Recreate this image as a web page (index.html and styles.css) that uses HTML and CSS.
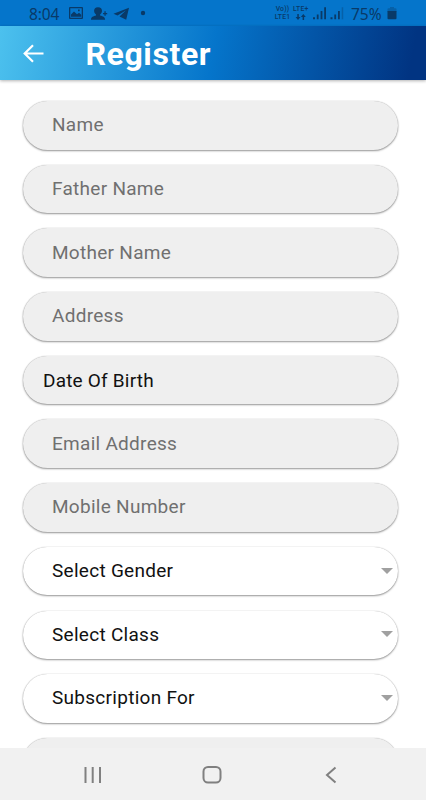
FILE: index.html
```html
<!DOCTYPE html>
<html lang="en">
<head>
<meta charset="utf-8">
<title>Register</title>
<link rel="stylesheet" href="styles.css">
</head>
<body>
<div class="screen">
  <div class="status">
    <span class="clock">8:04</span>
    <svg class="notices" width="80" height="26" viewBox="0 0 80 26">
      <path fill-rule="evenodd" d="M2 7h12q1 0 1 1v10q0 1-1 1H2q-1 0-1-1V8q0-1 1-1zM2.300 8.300v9.400h11.400V8.300zM3 16.800v-2.300l3-3 3 2.700 2-1.500 2.200 2v2.100zM10 9.500h1.700v1.700H10z"/>
      <path d="M30 7.200c2.800 0 4 1.500 4 3.600 0 1.700-.9 3-1.900 3.800v1c2.600.7 5 1.500 5 4.200H23c0-2.700 2.400-3.500 5-4.200v-1c-1-.8-1.900-2.100-1.900-3.800 0-2.100 1.200-3.600 3.900-3.600zM35 12.900h1.400v-1.600h1.300v1.600h1.500v1.300h-1.500v1.600h-1.300v-1.600H35z"/>
      <path d="M61 7.800 45.500 13.800l4 1.800 8.300-5-6.300 6 6.700 3.200z"/>
      <circle cx="75" cy="13" r="2.200"/>
    </svg>
    <div class="network">
      <div class="lines first"><span>Vo))</span><span>LTE1</span></div>
      <div class="lines"><span>LTE+</span><svg width="12" height="6" viewBox="0 0 12 6"><path d="M2.300 0h1.500v3h1.700L3 6 .6 3h1.700zM7.600 6h1.500V3h1.700L8.300 0 5.900 3h1.700z"/></svg></div>
    </div>
    <svg class="signal" width="31" height="26" viewBox="0 0 31 26">
      <path d="M0 17.300h2v2H0zM3.800 14.500h1.800v4.800H3.800zM7.600 11h1.800v8.300H7.600zM11.200 7.300H13v12h-1.800zM17.500 17.300h2v2h-2zM21.300 14.500h1.800v4.800h-1.800zM25 11h1.800v8.300H25z"/>
      <path opacity=".35" d="M28.700 7.300h1.500v12h-1.500z"/>
    </svg>
    <span class="percent">75%</span>
    <svg class="battery" width="10" height="26" viewBox="0 0 10 26">
      <path opacity=".35" d="M3 7h4v1.300h1.500q1 0 1 1V12H.5V9.300q0-1 1-1H3z"/>
      <path d="M.5 11h9v7.200q0 1-1 1h-7q-1 0-1-1z"/>
    </svg>
  </div>
  <header class="appbar">
    <svg width="22" height="20" viewBox="0 0 22 20"><path d="M21.500 10.500H3M11 2.300l-8.300 8.200L11 18.700"/></svg>
    <h1>Register</h1>
  </header>
  <main class="form">
    <div class="field">Name</div>
    <div class="field">Father Name</div>
    <div class="field">Mother Name</div>
    <div class="field">Address</div>
    <div class="field date">Date Of Birth</div>
    <div class="field">Email Address</div>
    <div class="field">Mobile Number</div>
    <div class="field select">Select Gender<i class="caret"></i></div>
    <div class="field select">Select Class<i class="caret"></i></div>
    <div class="field select">Subscription For<i class="caret"></i></div>
    <div class="field"></div>
  </main>
  <nav class="navbar">
    <svg width="20" height="20" viewBox="0 0 20 20"><path d="M2.500 2v16M9.700 2v16M17 2v16"/></svg>
    <svg width="20" height="20" viewBox="0 0 20 20"><rect x="1.500" y="2" width="17" height="15.500" rx="4.500"/></svg>
    <svg width="20" height="20" viewBox="0 0 20 20"><path d="M14.500 2.500 6 10l8.500 7.500"/></svg>
  </nav>
</div>
</body>
</html>
```
FILE: styles.css
```css
* { box-sizing: border-box; }
body { margin: 0; font-family: Roboto, "Liberation Sans", sans-serif; background: #fff; }
.screen { width: 426px; height: 800px; display: flex; flex-direction: column; overflow: hidden; }
.status {
  flex: none;
  height: 26px;
  display: flex;
  align-items: center;
  padding-left: 29px;
  background: #0575cb;
  color: #093a68;
  fill: #093a68;
}
.status > * { flex: none; }
.clock { width: 39px; font: 15.500px/26px "Noto Sans", sans-serif; letter-spacing: -.1px; padding-top: 1px; }
.notices { margin-right: 125px; }
.network { display: flex; width: 40px; gap: 1px; }
.lines { display: flex; flex-direction: column; width: 18px; font-size: 6.800px; line-height: 8px; font-weight: 500; letter-spacing: .2px; white-space: nowrap; }
.first { width: 19px; align-items: center; }
.lines svg { margin: 1px 0 0 2px; }
.percent { width: 37px; margin-left: 7px; font: 15.500px/26px "Noto Sans", sans-serif; padding-top: 1px; }
.battery { margin-left: -1px; }
.appbar {
  flex: none;
  height: 54px;
  display: flex;
  align-items: center;
  padding-left: 21.500px;
  background: linear-gradient(100deg, #4cc1ee 0%, #0575cb 50%, #013482 96%);
  box-shadow: 0 1px 3px rgba(0, 0, 0, .3);
  color: #fff;
}
.appbar svg { fill: none; stroke: #fff; stroke-width: 2.200; }
.appbar h1 { margin: 2px 0 0 42px; font-size: 32px; line-height: 52px; font-weight: 700; letter-spacing: .6px; }
.form {
  flex: 1;
  min-height: 0;
  overflow: hidden;
  display: flex;
  flex-direction: column;
  gap: 15.200px;
  padding: 21px 28px 0 23px;
}
.field {
  flex: none;
  height: 48.500px;
  display: flex;
  align-items: center;
  padding: 0 5px 1px 29px;
  border-radius: 25px;
  background: #efefef;
  box-shadow: 0 0 1px rgba(0, 0, 0, .3), 0 1px 2px rgba(0, 0, 0, .4);
  color: #707070;
  font-size: 19px;
  letter-spacing: .28px;
}
.date { padding: 0 0 0 20px; color: #111; letter-spacing: .2px; }
.select { background: #fff; color: #111; justify-content: space-between; }
.caret { border: 6px solid transparent; border-top-color: #a0a0a0; border-bottom: 0; }
.navbar {
  flex: none;
  height: 52px;
  display: flex;
  align-items: center;
  justify-content: space-between;
  padding: 2px 85px 0 83px;
  background: #f1f1f1;
}
.navbar svg { fill: none; stroke: #808080; stroke-width: 2; }
```
